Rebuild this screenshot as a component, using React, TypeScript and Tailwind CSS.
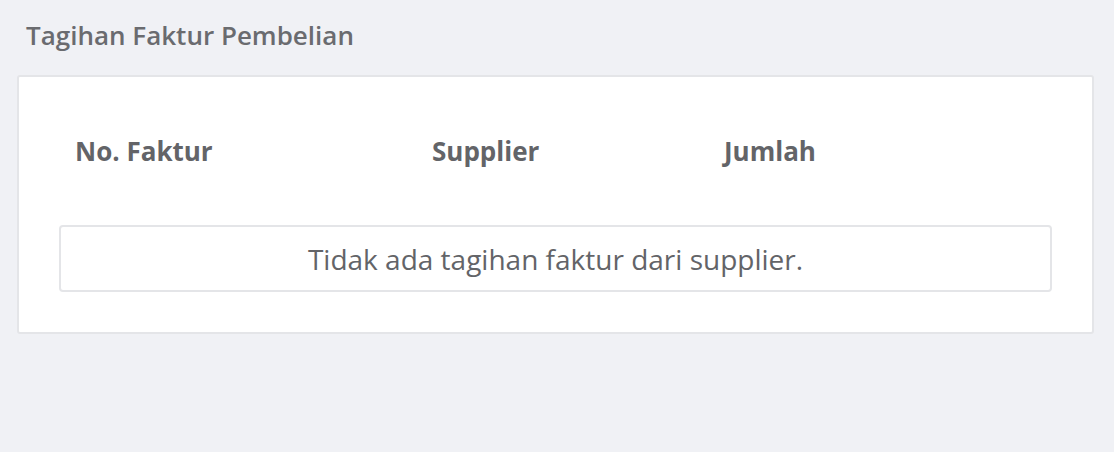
export default function App() {
  return (
    <div
      className="min-h-[452px] w-full bg-[#f0f1f5] px-[17px] pt-[17px]"
      style={{ fontFamily: '"Open Sans", sans-serif' }}
    >
      <h1 className="pl-[9px] text-[26px] leading-[36px] font-semibold text-[#6a6b6f]">
        Tagihan Faktur Pembelian
      </h1>
      <div className="mt-[22px] w-[1077px] rounded-[3px] border-2 border-[#e4e5e8] bg-white px-[40px] pt-[40px] pb-[40px]">
        <div className="grid grid-cols-[357px_292px_1fr] text-[26px] font-bold text-[#636468]">
          <div className="px-4 py-[17px] leading-[34px]">No. Faktur</div>
          <div className="px-4 py-[17px] leading-[34px]">Supplier</div>
          <div className="px-4 py-[17px] leading-[34px]">Jumlah</div>
        </div>
        <div className="mt-[40px] flex h-[67px] items-center justify-center rounded-[4px] border-2 border-[#e4e5e8] text-[28px] text-[#636468]">
          Tidak ada tagihan faktur dari supplier.
        </div>
      </div>
    </div>
  )
}
